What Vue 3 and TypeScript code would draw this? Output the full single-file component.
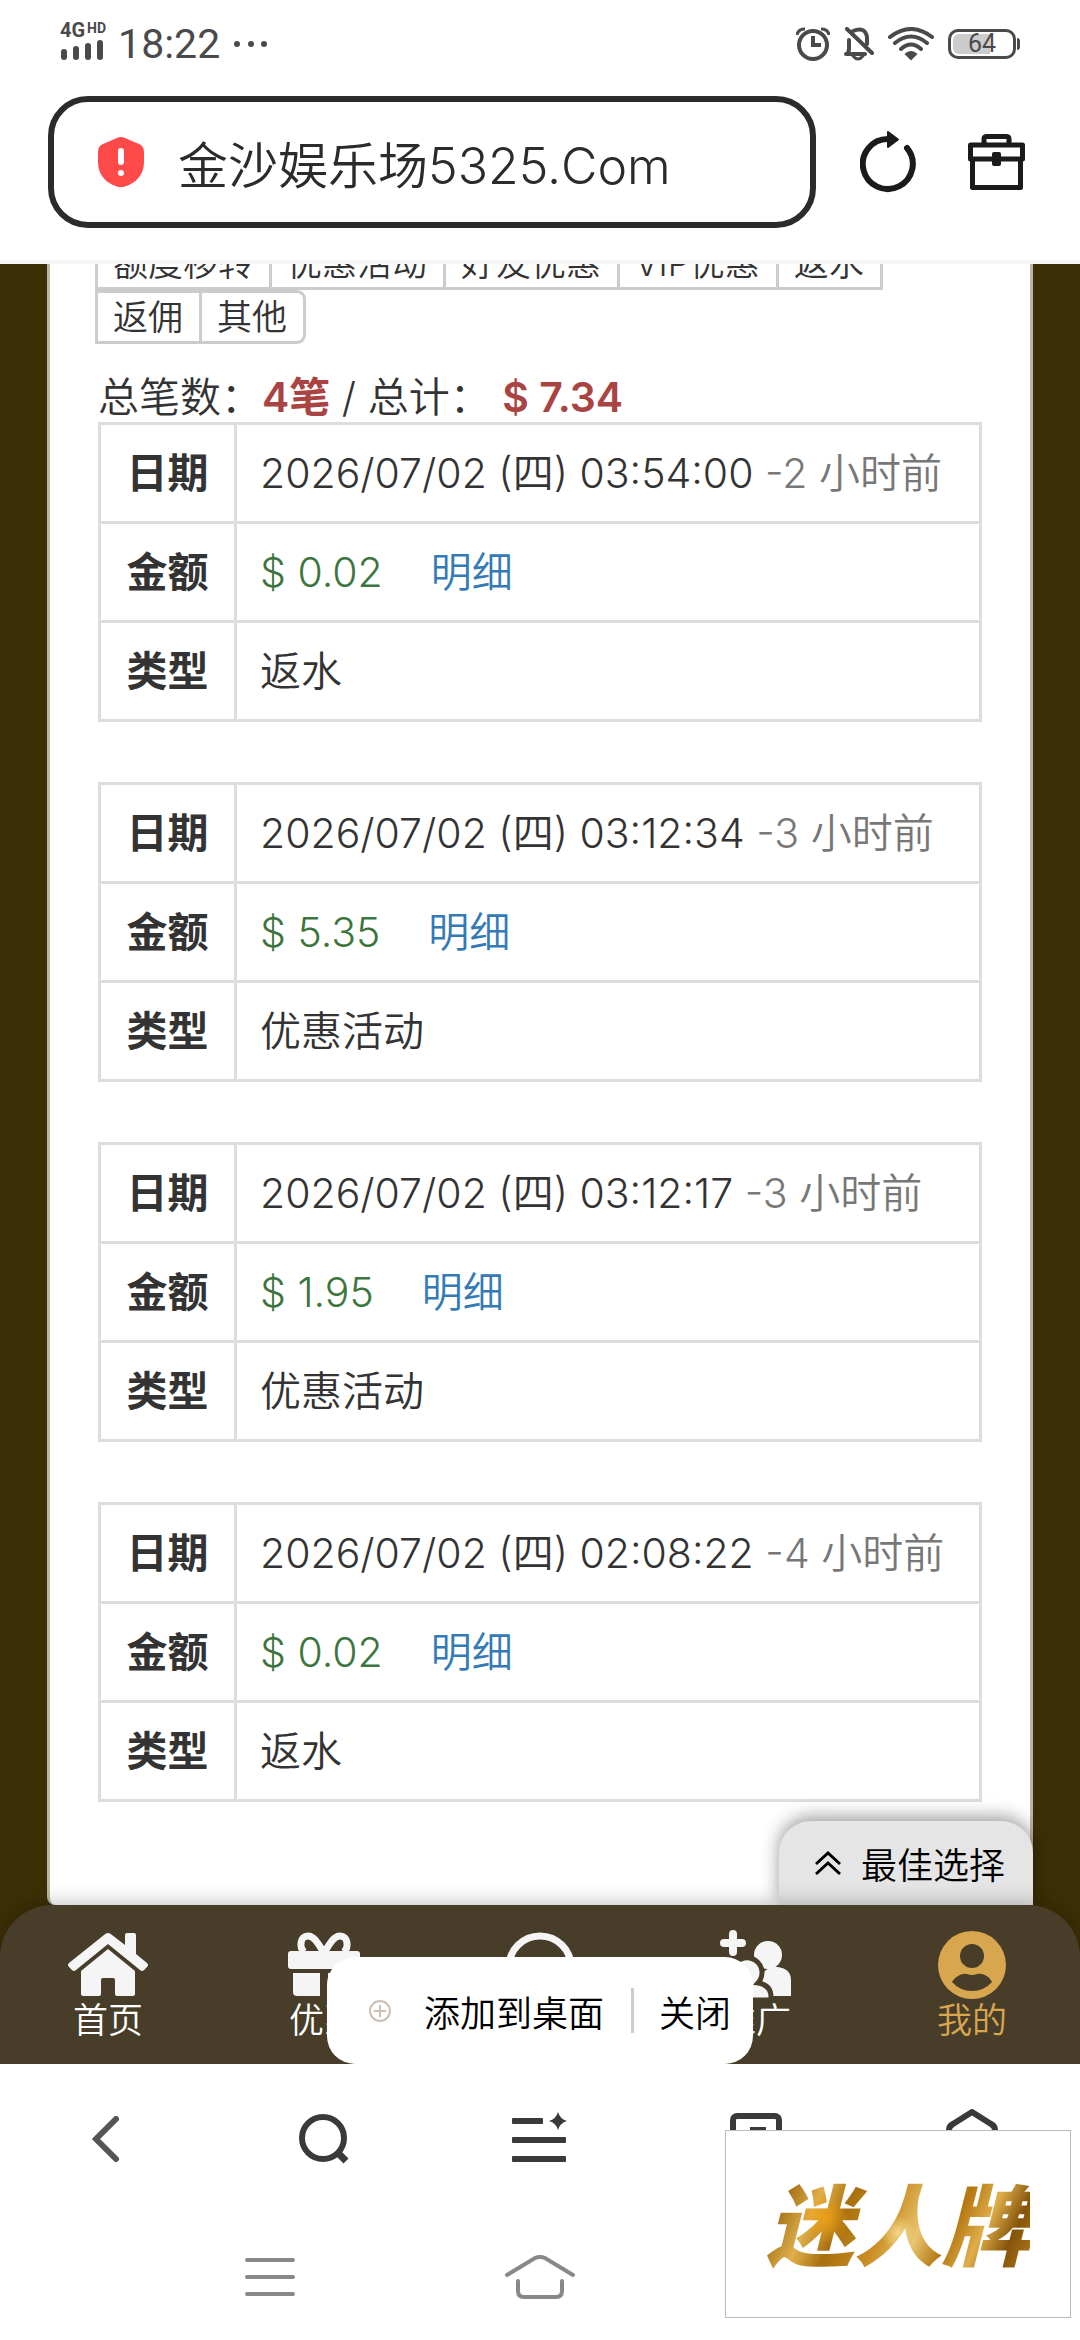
<script setup lang="ts">
import { ref } from 'vue'

interface RecordItem {
  date: string
  ago: string
  amount: string
  type: string
}

const address = ref('金沙娱乐场5325.Com')

const filterRows: string[][] = [
  ['额度移转', '优惠活动', '好友优惠', 'VIP优惠', '返水'],
  ['返佣', '其他'],
]

const records: RecordItem[] = [
  { date: '2026/07/02 (四) 03:54:00', ago: '-2 小时前', amount: '$ 0.02', type: '返水' },
  { date: '2026/07/02 (四) 03:12:34', ago: '-3 小时前', amount: '$ 5.35', type: '优惠活动' },
  { date: '2026/07/02 (四) 03:12:17', ago: '-3 小时前', amount: '$ 1.95', type: '优惠活动' },
  { date: '2026/07/02 (四) 02:08:22', ago: '-4 小时前', amount: '$ 0.02', type: '返水' },
]
</script>

<template>
  <div class="screen">
    <header class="top">
      <div class="status">
        <div class="status-side">
          <div class="signal">
            <span class="net">4G<span class="hd">HD</span></span>
            <svg width="44" height="20" viewBox="0 0 44 20" fill="#4a4a4a">
              <rect x="1" y="9" width="6" height="11" rx="3" />
              <rect x="13" y="6" width="6" height="14" rx="3" />
              <rect x="25" y="3" width="6" height="17" rx="3" />
              <rect x="37" y="0" width="6" height="20" rx="3" />
            </svg>
          </div>
          <time class="clock">18:22</time>
          <svg width="34" height="8" viewBox="0 0 34 8" fill="#4a4a4a">
            <circle cx="3" cy="4" r="3" />
            <circle cx="17" cy="4" r="3" />
            <circle cx="30" cy="4" r="3" />
          </svg>
        </div>
        <div class="status-side icons">
          <svg width="34" height="34" viewBox="0 0 34 34" fill="none" stroke="#4a4a4a" stroke-width="4">
            <circle cx="17" cy="18" r="14" />
            <path d="M17 9V18H25" />
            <path d="M1 8Q2 2 9 2M33 8Q32 2 25 2" stroke-width="3" />
          </svg>
          <svg width="30" height="34" viewBox="0 0 30 34" fill="none" stroke="#4a4a4a" stroke-width="4" stroke-linecap="round">
            <path d="M4 27L5 22V13M9 4Q21 -1 23 10V17M2 27H21M3 2L28 26" />
            <path d="M9 29Q14 35 19 29" stroke-width="3" />
          </svg>
          <svg width="46" height="34" viewBox="0 0 46 34" fill="none" stroke="#4a4a4a" stroke-width="4" stroke-linecap="round">
            <path d="M2 10Q23 -6 44 10M7 16Q23 3 39 16M13 22Q23 13 33 22" />
            <path d="M18 27Q23 23 28 27L23 32Z" fill="#4a4a4a" stroke-width="2" />
          </svg>
          <div class="battery">
            <span class="cell"><span class="level">64</span></span>
            <span class="tip"></span>
          </div>
        </div>
      </div>
      <div class="address-row">
        <div class="address">
          <svg width="46" height="50" viewBox="0 0 46 50">
            <path d="M19 1Q23 -1 27 1L41 7Q46 9 46 15V25C46 38 38 46 27 49.500Q23 51 19 49.500C8 46 0 38 0 25V15Q0 9 5 7Z" fill="#ff4a4a" />
            <path d="M23 14V25" stroke="#fff" stroke-width="6" stroke-linecap="round" />
            <circle cx="23" cy="36" r="3" fill="#fff" />
          </svg>
          <input v-model="address" class="address-input" type="text" aria-label="网址" />
        </div>
        <button class="icon-btn" type="button" aria-label="刷新">
          <svg width="56" height="62" viewBox="0 0 56 62">
            <path d="M28 8A25 25 0 1 0 47 17" fill="none" stroke="#1b1b1b" stroke-width="6" stroke-linecap="round" />
            <path d="M28 1L38 8.500L28 16Z" fill="#1b1b1b" stroke="#1b1b1b" stroke-width="2" stroke-linejoin="round" />
          </svg>
        </button>
        <button class="icon-btn" type="button" aria-label="工具箱">
          <svg width="57" height="56" viewBox="0 0 57 56" fill="none" stroke="#1b1b1b" stroke-width="5" stroke-linejoin="round">
            <path d="M16 10V5Q16 2.500 19 2.500H38Q41 2.500 41 5V10" />
            <path d="M2.500 25V11H54.500V25Z" />
            <path d="M4.500 25V53.500H52.500V25" />
            <rect x="26" y="20" width="5" height="10" fill="#1b1b1b" stroke-width="4" />
          </svg>
        </button>
      </div>
    </header>

    <main class="site">
      <section class="panel">
        <div class="filters">
          <div v-for="(row, r) in filterRows" :key="r" class="filter-row">
            <button v-for="name in row" :key="name" type="button" class="filter">{{ name }}</button>
          </div>
        </div>

        <p class="summary">
          总笔数：<strong>4笔</strong> / 总计： <strong>$ 7.34</strong>
        </p>

        <table v-for="(item, i) in records" :key="i" class="record">
          <tbody>
            <tr>
              <th scope="row">日期</th>
              <td>{{ item.date }} <span class="ago">{{ item.ago }}</span></td>
            </tr>
            <tr>
              <th scope="row">金额</th>
              <td><span class="amount">{{ item.amount }}</span><a class="detail" href="#">明细</a></td>
            </tr>
            <tr>
              <th scope="row">类型</th>
              <td>{{ item.type }}</td>
            </tr>
          </tbody>
        </table>
      </section>
      <button class="best" type="button">
        <svg width="26" height="26" viewBox="0 0 26 26" fill="none" stroke="#000" stroke-width="3">
          <path d="M1 14L13 3L25 14M1 24L13 13L25 24" />
        </svg>
        最佳选择
      </button>
    </main>

    <div class="dock">
      <nav class="site-nav">
        <a href="#">
          <svg width="80" height="70" viewBox="0 0 80 70" fill="#f5f5f5">
            <path d="M36 5Q40 1 44 5L57 15V5Q57 3 59 3H66Q68 3 68 5V24L79 33Q81 35 79 37L76 40Q74 42 72 40L40 14L8 40Q6 42 4 40L1 37Q-1 35 1 33Z" />
            <path d="M40 19L67 41V64Q67 66 65 66H49Q47 66 47 64V50Q47 48 45 48H35Q33 48 33 50V64Q33 66 31 66H15Q13 66 13 64V41Z" />
          </svg>
          首页
        </a>
        <a href="#">
          <svg width="72" height="70" viewBox="0 0 72 70" fill="#f5f5f5">
            <rect y="21" width="72" height="18" rx="3" />
            <path d="M5 43H32V66H9Q5 66 5 62ZM40 43H67V62Q67 66 63 66H40Z" />
            <path d="M36 23C30 13 26 6 20 6C12 6 11 17 16 22M36 23C42 13 46 6 52 6C60 6 61 17 56 22" fill="none" stroke="#f5f5f5" stroke-width="7" />
          </svg>
          优惠
        </a>
        <a href="#" aria-label="客服">
          <svg width="72" height="70" viewBox="0 0 72 70" fill="none" stroke="#f5f5f5" stroke-width="7">
            <path d="M5 50V37A31 31 0 0 1 67 37V50M60 54Q56 66 38 66" />
          </svg>
        </a>
        <a href="#">
          <svg width="72" height="70" viewBox="0 0 72 70" fill="#f5f5f5">
            <path d="M13 4V22M4 13H22" stroke="#f5f5f5" stroke-width="8" stroke-linecap="round" />
            <circle cx="48" cy="25" r="14" />
            <path d="M34 66V48Q44 42 50 37H58Q71 39 71 50V66Z" />
            <path d="M0 70V62Q2 53 16 53A15 15 0 1 1 38 53Q51 55 51 67V70Z" stroke="#483d29" stroke-width="5" />
          </svg>
          推广
        </a>
        <a href="#" class="active">
          <svg width="70" height="70" viewBox="0 0 70 70">
            <circle cx="35" cy="35" r="34" fill="#d9a650" />
            <circle cx="35" cy="26" r="12" fill="#483d29" />
            <path d="M15 52C19 46 25 43 30 44Q35 46 40 44C46 43 52 46 55 52Q47 61 35 61Q23 61 15 52Z" fill="#483d29" />
          </svg>
          我的
        </a>
      </nav>
      <div class="add-home">
        <svg width="22" height="22" viewBox="0 0 22 22" fill="none" stroke="#cdbfb4" stroke-width="2">
          <circle cx="11" cy="11" r="10" />
          <path d="M11 5V17M5 11H17" />
        </svg>
        <button type="button" class="add">添加到桌面</button>
        <span class="rule"></span>
        <button type="button">关闭</button>
      </div>
    </div>

    <footer class="bottom">
      <div class="toolbar">
        <button type="button" aria-label="后退">
          <svg width="32" height="46" viewBox="0 0 32 46" fill="none" stroke="#555" stroke-width="6" stroke-linecap="round">
            <path d="M24 3L4 23L24 43" />
          </svg>
        </button>
        <button type="button" aria-label="搜索">
          <svg width="50" height="50" viewBox="0 0 50 50" fill="none" stroke="#3a3a3a" stroke-width="6">
            <circle cx="24" cy="24" r="21" />
            <path d="M39 39L47 47" stroke-width="7" />
          </svg>
        </button>
        <button type="button" aria-label="菜单">
          <svg width="56" height="56" viewBox="0 0 56 56" fill="#3a3a3a">
            <rect y="7" width="31" height="6" rx="1" />
            <rect y="26" width="54" height="6" rx="1" />
            <rect y="45" width="54" height="6" rx="1" />
            <path d="M46 1Q48 8 55 10Q48 12 46 19Q44 12 37 10Q44 8 46 1Z" />
          </svg>
        </button>
        <button type="button" aria-label="标签页">
          <svg width="52" height="52" viewBox="0 0 52 52" fill="none" stroke="#3a3a3a" stroke-width="6">
            <rect x="3" y="3" width="46" height="46" rx="4" />
            <path d="M20 17H33V35" />
          </svg>
        </button>
        <button type="button" aria-label="主页">
          <svg width="52" height="60" viewBox="0 0 52 60" fill="none" stroke="#3a3a3a" stroke-width="6" stroke-linejoin="round">
            <path d="M26 3L45 15Q49 17 49 21V56H3V21Q3 17 7 15Z" />
          </svg>
        </button>
      </div>
      <div class="system">
        <button type="button" aria-label="最近任务">
          <svg width="50" height="40" viewBox="0 0 50 40" stroke="#888" stroke-width="4" stroke-linecap="round">
            <path d="M2 3H48M2 20H48M2 37H48" />
          </svg>
        </button>
        <button type="button" aria-label="桌面">
          <svg width="72" height="44" viewBox="0 0 72 44" fill="none" stroke="#888" stroke-width="4" stroke-linecap="round">
            <path d="M3 20L31 3Q36 1 41 3L69 20M14 26V36Q14 42 20 42H52Q58 42 58 36V26" />
          </svg>
        </button>
        <button type="button" aria-label="返回">
          <svg width="26" height="44" viewBox="0 0 26 44" fill="none" stroke="#888" stroke-width="4" stroke-linecap="round">
            <path d="M23 3L4 22L23 41" />
          </svg>
        </button>
      </div>
      <aside class="brand"><span>迷人牌</span></aside>
    </footer>
  </div>
</template>

<style>
body {
  margin: 0;
  background: #fff;
}
</style>

<style scoped>
.screen {
  display: flex;
  flex-direction: column;
  min-height: 100vh;
  background: #fff;
  color: #333;
  font-family: Inter, "Noto Sans CJK SC", sans-serif;
  font-weight: 350;
  font-size: 41px;
}

svg {
  display: block;
  flex: none;
}

button {
  font: inherit;
  color: inherit;
  background: none;
  border: 0;
  padding: 0;
  white-space: nowrap;
}

.top {
  position: relative;
  z-index: 2;
  box-sizing: border-box;
  height: 264px;
  background: #fff;
  border-bottom: 4px solid #f6f6f6;
}

.status {
  display: flex;
  justify-content: space-between;
  align-items: center;
  height: 88px;
  padding: 0 60px;
  color: #4a4a4a;
}

.status-side {
  display: flex;
  align-items: center;
}

.signal {
  display: flex;
  flex-direction: column;
  margin-top: -8px;
}

.net {
  display: flex;
  gap: 2px;
  font: 700 20px/20px Roboto, sans-serif;
}

.hd {
  font-size: 14px;
  line-height: 16px;
}

.clock {
  margin: 0 14px 0 12px;
  font: 400 41px/48px Roboto, sans-serif;
}

.icons {
  gap: 14px;
}

.battery {
  display: flex;
  align-items: center;
}

.cell {
  display: block;
  box-sizing: border-box;
  width: 68px;
  height: 30px;
  border: 3px solid #4a4a4a;
  border-radius: 10px;
  padding: 2px;
}

.level {
  display: block;
  border-radius: 6px;
  background: linear-gradient(90deg, #ccc 64%, transparent 64%);
  font: 400 25px/20px Roboto, sans-serif;
  text-align: center;
}

.tip {
  width: 3px;
  height: 12px;
  margin-left: 1px;
  border-radius: 0 3px 3px 0;
  background: #4a4a4a;
}

.address-row {
  display: flex;
  align-items: center;
  margin: 8px 55px 0 48px;
}

.address {
  display: flex;
  align-items: center;
  flex: 1;
  min-width: 0;
  box-sizing: border-box;
  height: 132px;
  padding: 0 44px;
  border: 6px solid #2b2b2b;
  border-radius: 40px;
}

.address-input {
  flex: 1;
  min-width: 0;
  margin-left: 34px;
  padding: 0;
  border: 0;
  outline: 0;
  background: none;
  color: #2b2b2b;
  font: inherit;
  font-size: 50px;
}

.icon-btn {
  margin-left: 44px;
}

.icon-btn + .icon-btn {
  margin-left: 52px;
}

.site {
  position: relative;
  display: flex;
  flex-direction: column;
  flex: 1;
  padding: 0 47px;
  background: #3d2f05;
}

.panel {
  flex: 1;
  box-sizing: border-box;
  margin-top: -28px;
  padding: 0 48px;
  background: #fff;
  border: solid #bbb7a8;
  border-width: 0 3px;
  border-radius: 0 0 8px 8px;
}

.filters {
  margin-left: -3px;
}

.filter-row {
  display: flex;
}

.filter {
  box-sizing: border-box;
  height: 54px;
  padding: 0 16px 0 15px;
  border: 3px solid #ccc;
  font-size: 35px;
  line-height: 46px;
}

.filter + .filter {
  margin-left: -3px;
}

.filter-row:last-child .filter:last-child {
  border-radius: 0 9px 9px 0;
}

.summary {
  margin: 28px 0 0;
  line-height: 50px;
  white-space: nowrap;
}

.summary strong {
  font-weight: 600;
  color: #a94442;
}

.record {
  width: 100%;
  height: 300px;
  margin-bottom: 60px;
  border-collapse: collapse;
  table-layout: fixed;
}

.record th,
.record td {
  height: 96px;
  box-sizing: border-box;
  padding: 0;
  border: 3px solid #ddd;
  line-height: 56px;
  white-space: nowrap;
}

.record th {
  width: 136px;
  font-weight: 700;
  text-align: center;
}

.record td {
  padding-left: 23px;
  text-align: left;
}

.ago {
  color: #777;
}

.amount {
  color: #3c763d;
}

.detail {
  margin-left: 48px;
  color: #337ab7;
  text-decoration: none;
}

.best {
  position: absolute;
  right: 47px;
  bottom: 0;
  display: flex;
  align-items: center;
  gap: 20px;
  height: 84px;
  padding: 0 28px 0 36px;
  border-radius: 32px 32px 0 0;
  background: #e5e5e5;
  box-shadow: 0 -4px 18px rgba(0, 0, 0, 0.4);
  color: #000;
  font-size: 36px;
}

.dock {
  position: relative;
  z-index: 1;
  background: #3d2f05;
}

.site-nav {
  display: grid;
  grid-template-columns: repeat(5, 1fr);
  box-sizing: border-box;
  height: 159px;
  padding-top: 25px;
  border-radius: 52px 52px 0 0;
  background: #483d29;
  box-shadow: 0 -2px 20px rgba(0, 0, 0, 0.25);
}

.site-nav a {
  display: flex;
  flex-direction: column;
  align-items: center;
  color: #fff;
  font-size: 35px;
  line-height: 40px;
  text-decoration: none;
}

.site-nav a.active {
  color: #d9a650;
}

.add-home {
  position: absolute;
  left: 50%;
  bottom: 0;
  transform: translateX(-50%);
  display: flex;
  align-items: center;
  box-sizing: border-box;
  height: 107px;
  padding: 0 22px 0 42px;
  border-radius: 28px;
  background: #fff;
  color: #000;
  font-size: 36px;
}

.add {
  margin-left: 33px;
}

.rule {
  width: 3px;
  height: 45px;
  margin: 0 25px 0 27px;
  background: #ccc;
}

.bottom {
  position: relative;
  z-index: 2;
  display: flex;
  flex-direction: column;
  height: 276px;
  background: #fff;
}

.toolbar {
  display: grid;
  grid-template-columns: repeat(5, 1fr);
  height: 150px;
}

.system {
  display: grid;
  grid-template-columns: repeat(3, 1fr);
  height: 126px;
  padding: 0 135px;
}

.toolbar button,
.system button {
  display: flex;
  align-items: center;
  justify-content: center;
}

.brand {
  position: absolute;
  right: 9px;
  bottom: 22px;
  display: flex;
  align-items: center;
  justify-content: center;
  box-sizing: border-box;
  width: 346px;
  height: 188px;
  padding-bottom: 6px;
  border: 1px solid #bbb;
  background: #fff;
}

.brand span {
  background:
    radial-gradient(circle at 22% 48%, rgba(240, 160, 20, 0.9), transparent 12%),
    radial-gradient(circle at 50% 60%, rgba(250, 225, 150, 0.8), transparent 12%),
    linear-gradient(115deg, #8a5a10 0%, #a8751a 12%, #e0b04c 22%, #a8700f 32%, #c98d22 46%, #e8c570 58%, #b3760f 68%, #dfae4a 78%, #85540a 88%, #b8801f 100%);
  background-clip: text;
  -webkit-background-clip: text;
  color: transparent;
  font: italic 900 88px/120px "Noto Sans CJK SC", sans-serif;
}
</style>
